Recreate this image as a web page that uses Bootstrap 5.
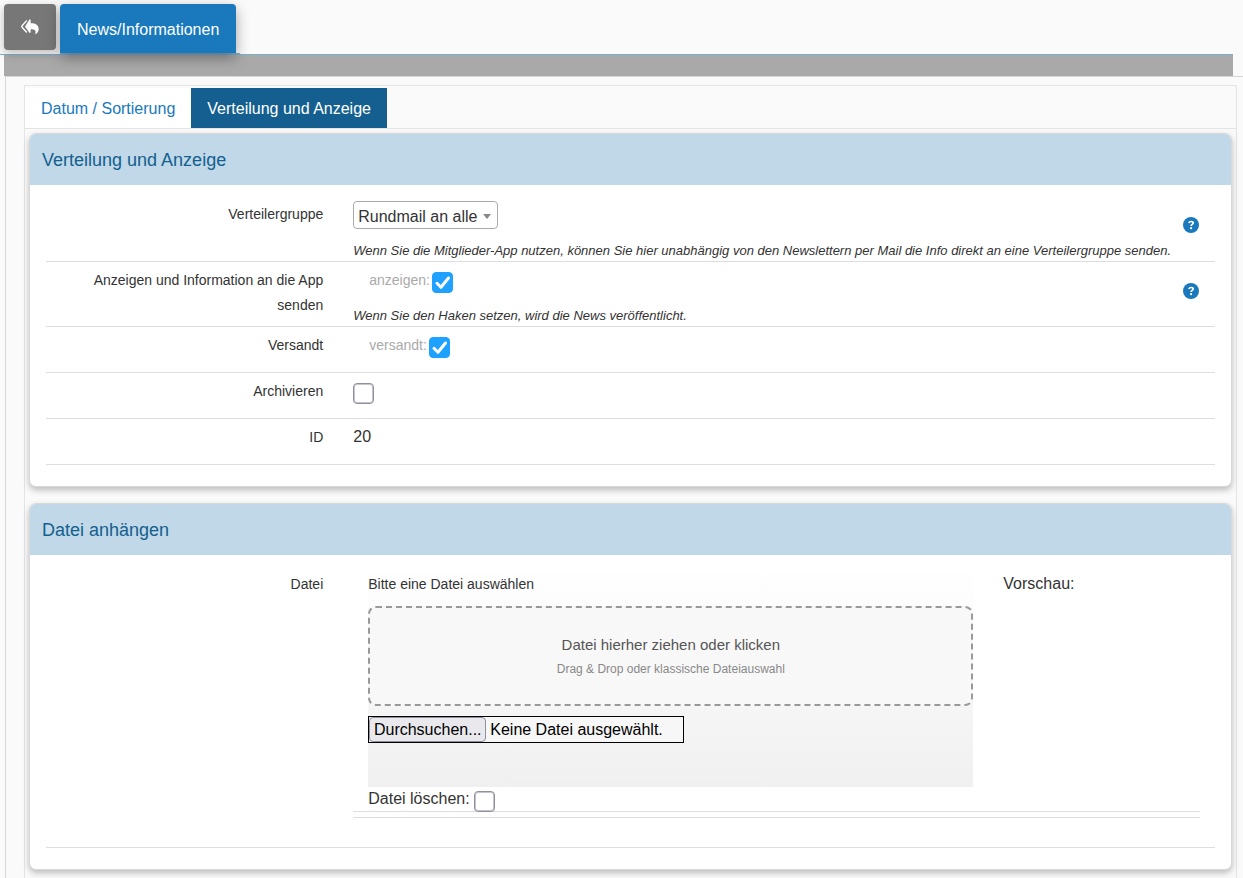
<!DOCTYPE html>
<html lang="de">
<head>
<meta charset="utf-8">
<meta name="viewport" content="width=device-width, initial-scale=1">
<title>News/Informationen</title>
<link href="https://cdn.jsdelivr.net/npm/bootstrap@5.3.0/dist/css/bootstrap.min.css" rel="stylesheet">
<style>
  body { background: #fafafa; color: #333; font-family: "Liberation Sans", Arial, sans-serif; font-size: 16px; line-height: 24px; overflow-x: hidden; }
  .top-nav { height: 55px; margin-right: 10px; padding: 4px 0 0 4px; border-bottom: 1px solid #7dafcd; z-index: 1; }
  .btn-back { width: 52px; height: 46px; background: #777; color: #fff; border: 0; border-radius: 4px; padding: 0; box-shadow: 0 3px 10px rgba(0,0,0,.25); }
  .btn-back:hover { background: #666; color: #fff; }
  .main-tab-wrap { height: 50px; padding-right: 4px; border-bottom: 1px solid #7dafcd; }
  .main-tab { height: 49px; padding: 2px 17px 0; background: #1979bc; color: #fff; border-radius: 4px 4px 0 0; box-shadow: 0 5px 14px rgba(0,0,0,.35); }
  .grey-bar { height: 21px; margin: 0 10px 0 4px; background: #a9a9a9; }
  .frame { margin-left: 5px; border: solid #d6d6d6; border-width: 1px 0 0 1px; padding: 8px 6px 0 18px; }
  .frame-inner { border: 1px solid #e4e4e4; border-bottom: 0; padding-bottom: 24px; }
  .sub-tabs { padding-top: 2px; border-bottom: 1px solid #e4e4e4; }
  .sub-tabs .nav-link { padding: 9px 16px 7px; border-radius: 0; color: #1979bc; background: #fff; }
  .sub-tabs .nav-link.active { background: #145f8f; color: #fff; }
  .panel { margin: 4px 4px 16px; border: 1px solid #d8d8d8; border-radius: 7px; background: #fff; box-shadow: 0 3px 6px rgba(0,0,0,.25); }
  .panel-head { height: 51px; padding: 0 12px; border: 0; background: #c0d8e7; color: #145f8f; border-radius: 6px 6px 0 0; }
  .panel-head h2 { font-size: 18px; line-height: 24px; font-weight: 400; margin: 0; }
  .panel-content { padding: 11px 16px 21px; }
  .row { --bs-gutter-x: 30px; }
  .form-line { margin: 0; border-bottom: 1px solid #dedede; min-height: 46px; }
  .line-label { font-size: 14px; line-height: 25px; padding-top: 6px; text-align: right; }
  .hint { font-size: 13px; line-height: 20px; padding-top: 12px; font-style: italic; }
  .soft { font-size: 14px; line-height: 25px; color: #aaa; }
  .check-pair { gap: 2px; }
  .check-pair .soft, .line-value { padding-top: 6px; }
  .help-btn { width: 16px; height: 16px; padding: 0; border: 0; line-height: 0; background: none; margin: 21px 1px 0 0; }
  .group-select { width: 145px; height: 28px; margin-top: 5px; padding: 2px 16px 0 4px; border: 1px solid #aaa; border-radius: 4px; color: #333; font-size: 16px; line-height: 26px;
    background: #fff url("data:image/svg+xml,%3Csvg xmlns='http://www.w3.org/2000/svg' width='8' height='5'%3E%3Cpath d='M0 0h8L4 5z' fill='%23888'/%3E%3C/svg%3E") no-repeat right 6px top 12px; }
  .tick { flex: none; width: 21px; height: 21px; margin: 0; border: 1px solid #8f8f9d; border-radius: 3px; background-color: #fff; box-shadow: inset 0 0 0 1px #c4c4cc; }
  .line-tick { margin: 10px 0 1px; }
  .tick:checked { border-color: #1fa2ff; background-color: #1fa2ff; box-shadow: none; background-size: 21px 21px; background-position: center;
    background-image: url("data:image/svg+xml,%3Csvg xmlns='http://www.w3.org/2000/svg' viewBox='0 0 21 21'%3E%3Cpath d='M5 11.3l4 4L16.5 6' fill='none' stroke='%23fff' stroke-width='3' stroke-linecap='round' stroke-linejoin='round'/%3E%3C/svg%3E"); }
  .upload-area { height: 221px; background: linear-gradient(#fff, #f0f0f0); }
  .upload-title { font-size: 14px; line-height: 25px; padding-top: 6px; margin-bottom: 9px; }
  .drop-zone { height: 100px; padding-top: 2px; border: 2px dashed #999; border-radius: 8px; background: #f8f8f8; color: #555; font-size: 15px; line-height: 25px; margin-bottom: 10px; }
  .drop-zone small { font-size: 12px; color: #888; line-height: 25px; }
  .file-pick { width: 316px; height: 27px; border: 1px solid #000; color: #000; background: #f7f7f7; cursor: pointer; line-height: 25px; white-space: nowrap; }
  .file-btn { width: 117px; height: 25px; text-align: center; border: 1px solid #8f8f9d; border-radius: 4px; background: #e9e9ed; margin-right: 4px; line-height: 24px; }
  .delete-line { height: 24px; }
  .nested { border-bottom: 1px solid #dedede; }
  .nested-end { height: 6px; border-bottom: 1px solid #dedede; margin-bottom: 29px; }
</style>
</head>
<body>
<header class="top-nav position-relative d-flex gap-1">
  <button type="button" class="btn btn-back d-flex align-items-center justify-content-center" aria-label="Zurück">
    <svg width="18" height="16" viewBox="0 0 18 16" aria-hidden="true"><path d="M9.600 1v3.200c5.400 0 8.100 2 8.100 5.800 0 2.200-1.200 4-2.700 5-.5.3-.9-.1-.7-.6 1-3-.6-4.200-4.700-4.200v3c0 .7-.7.900-1.100.5L4.400 8.200a.9.900 0 010-1.300L8.500.5c.4-.4 1.100-.2 1.100.5z" fill="#fff"/><path d="M5.400 1.900L1.100 6.800a1.200 1.200 0 000 1.500l4.300 4.700" fill="none" stroke="#fff" stroke-width="1.400" stroke-linecap="round" stroke-linejoin="round"/></svg>
  </button>
  <div class="main-tab-wrap"><a href="#" class="main-tab d-flex align-items-center text-decoration-none">News/Informationen</a></div>
</header>
<div class="grey-bar"></div>
<main class="frame">
  <div class="frame-inner">
    <ul class="nav sub-tabs">
      <li class="nav-item"><a class="nav-link" href="#">Datum / Sortierung</a></li>
      <li class="nav-item"><a class="nav-link active" aria-current="page" href="#">Verteilung und Anzeige</a></li>
    </ul>

    <section class="panel">
      <div class="panel-head d-flex align-items-center"><h2>Verteilung und Anzeige</h2></div>
      <div class="panel-content">
        <div class="row form-line">
          <label class="col-3 line-label" for="gruppe">Verteilergruppe</label>
          <div class="col-9 d-flex justify-content-between">
            <div>
              <select class="form-select group-select" id="gruppe"><option>Rundmail an alle</option></select>
              <div class="hint">Wenn Sie die Mitglieder-App nutzen, können Sie hier unabhängig von den Newslettern per Mail die Info direkt an eine Verteilergruppe senden.</div>
            </div>
            <button type="button" class="help-btn" aria-label="Hilfe"><svg width="16" height="16" viewBox="0 0 16 16"><circle cx="8" cy="8" r="8" fill="#1979bc"/><path d="M5.800 6C6.200 4.900 7 4.500 8.100 4.500c1.300 0 2.100.6 2.100 1.500C10.200 7.400 8.100 7.300 8.100 8.900" fill="none" stroke="#fff" stroke-width="1.700"/><circle cx="8.100" cy="11.200" r="1.100" fill="#fff"/></svg></button>
          </div>
        </div>
        <div class="row form-line">
          <label class="col-3 line-label" for="anzeigen">Anzeigen und Information an die App senden</label>
          <div class="col-9 d-flex justify-content-between">
            <div>
              <div class="d-flex check-pair ps-3"><label class="soft" for="anzeigen">anzeigen:</label><input class="form-check-input tick line-tick" type="checkbox" id="anzeigen" checked></div>
              <div class="hint">Wenn Sie den Haken setzen, wird die News veröffentlicht.</div>
            </div>
            <button type="button" class="help-btn" aria-label="Hilfe"><svg width="16" height="16" viewBox="0 0 16 16"><circle cx="8" cy="8" r="8" fill="#1979bc"/><path d="M5.800 6C6.200 4.900 7 4.500 8.100 4.500c1.300 0 2.100.6 2.100 1.500C10.200 7.400 8.100 7.300 8.100 8.900" fill="none" stroke="#fff" stroke-width="1.700"/><circle cx="8.100" cy="11.200" r="1.100" fill="#fff"/></svg></button>
          </div>
        </div>
        <div class="row form-line">
          <label class="col-3 line-label" for="versandt">Versandt</label>
          <div class="col-9"><div class="d-flex check-pair ps-3"><label class="soft" for="versandt">versandt:</label><input class="form-check-input tick line-tick" type="checkbox" id="versandt" checked></div></div>
        </div>
        <div class="row form-line">
          <label class="col-3 line-label" for="archiv">Archivieren</label>
          <div class="col-9 d-flex"><input class="form-check-input tick line-tick" type="checkbox" id="archiv"></div>
        </div>
        <div class="row form-line">
          <div class="col-3 line-label">ID</div>
          <div class="col-9 line-value">20</div>
        </div>
      </div>
    </section>

    <section class="panel">
      <div class="panel-head d-flex align-items-center"><h2>Datei anhängen</h2></div>
      <div class="panel-content">
        <div class="row form-line">
          <div class="col-3 line-label">Datei</div>
          <div class="col-9">
            <div class="row nested mx-0">
              <div class="col-9">
                <div class="upload-area">
                  <div class="upload-title">Bitte eine Datei auswählen</div>
                  <div class="drop-zone d-flex flex-column align-items-center justify-content-center"><span>Datei hierher ziehen oder klicken</span><small>Drag &amp; Drop oder klassische Dateiauswahl</small></div>
                  <input type="file" id="datei" class="visually-hidden">
                  <label for="datei" class="file-pick d-flex align-items-center"><span class="file-btn">Durchsuchen...</span><span>Keine Datei ausgewählt.</span></label>
                </div>
                <div class="delete-line d-flex gap-1"><label for="loeschen">Datei löschen:</label><input class="form-check-input tick mt-1" type="checkbox" id="loeschen"></div>
              </div>
              <div class="col-3 line-value">Vorschau:</div>
            </div>
            <div class="nested-end"></div>
          </div>
        </div>
      </div>
    </section>
  </div>
</main>
<script src="https://cdn.jsdelivr.net/npm/bootstrap@5.3.0/dist/js/bootstrap.bundle.min.js"></script>
</body>
</html>
